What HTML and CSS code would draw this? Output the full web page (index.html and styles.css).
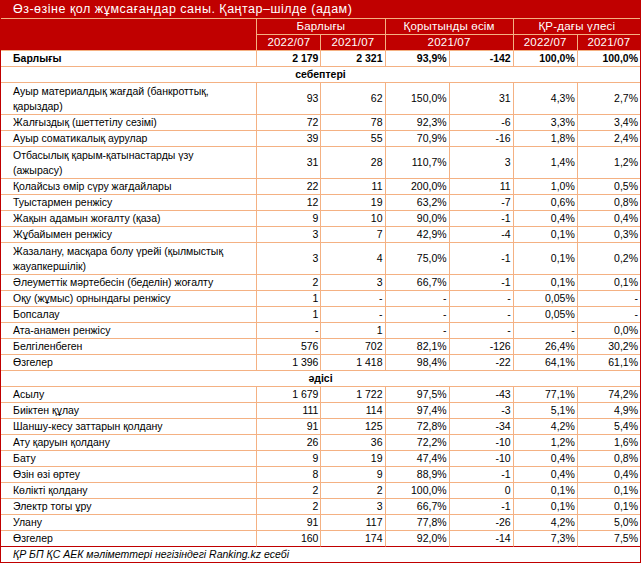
FILE: index.html
```html
<!DOCTYPE html>
<html lang="kk">
<head>
<meta charset="utf-8">
<title>Өз-өзіне қол жұмсағандар саны</title>
<link rel="stylesheet" href="styles.css">
</head>
<body>
<table class="sheet">
  <colgroup>
    <col class="c-label">
    <col class="c-num"><col class="c-num"><col class="c-num"><col class="c-num"><col class="c-num"><col class="c-last">
  </colgroup>
  <thead>
    <tr class="title-row"><th colspan="7" class="title">Өз-өзіне қол жұмсағандар саны. Қаңтар–шілде (адам)</th></tr>
    <tr class="head-row">
      <th rowspan="2" class="h-label"></th>
      <th colspan="2">Барлығы</th>
      <th colspan="2">Қорытынды өсім</th>
      <th colspan="2" class="end">ҚР-дағы үлесі</th>
    </tr>
    <tr class="head-row sub">
      <th>2022/07</th>
      <th>2021/07</th>
      <th colspan="2">2021/07</th>
      <th>2022/07</th>
      <th class="end">2021/07</th>
    </tr>
  </thead>
  <tbody>
    <tr class="total"><td class="lbl">Барлығы</td><td>2 179</td><td>2 321</td><td>93,9%</td><td>-142</td><td>100,0%</td><td class="end">100,0%</td></tr>
    <tr class="section"><td colspan="7">себептері</td></tr>
    <tr class="tall"><td class="lbl">Ауыр материалдық жағдай (банкроттық,<br>қарыздар)</td><td>93</td><td>62</td><td>150,0%</td><td>31</td><td>4,3%</td><td class="end">2,7%</td></tr>
    <tr><td class="lbl">Жалғыздық (шеттетілу сезімі)</td><td>72</td><td>78</td><td>92,3%</td><td>-6</td><td>3,3%</td><td class="end">3,4%</td></tr>
    <tr><td class="lbl">Ауыр соматикалық аурулар</td><td>39</td><td>55</td><td>70,9%</td><td>-16</td><td>1,8%</td><td class="end">2,4%</td></tr>
    <tr class="tall"><td class="lbl">Отбасылық қарым-қатынастарды үзу<br>(ажырасу)</td><td>31</td><td>28</td><td>110,7%</td><td>3</td><td>1,4%</td><td class="end">1,2%</td></tr>
    <tr><td class="lbl">Қолайсыз өмір сүру жағдайлары</td><td>22</td><td>11</td><td>200,0%</td><td>11</td><td>1,0%</td><td class="end">0,5%</td></tr>
    <tr><td class="lbl">Туыстармен ренжісу</td><td>12</td><td>19</td><td>63,2%</td><td>-7</td><td>0,6%</td><td class="end">0,8%</td></tr>
    <tr><td class="lbl">Жақын адамын жоғалту (қаза)</td><td>9</td><td>10</td><td>90,0%</td><td>-1</td><td>0,4%</td><td class="end">0,4%</td></tr>
    <tr><td class="lbl">Жұбайымен ренжісу</td><td>3</td><td>7</td><td>42,9%</td><td>-4</td><td>0,1%</td><td class="end">0,3%</td></tr>
    <tr class="tall"><td class="lbl">Жазалану, масқара болу үрейі (қылмыстық<br>жауапкершілік)</td><td>3</td><td>4</td><td>75,0%</td><td>-1</td><td>0,1%</td><td class="end">0,2%</td></tr>
    <tr><td class="lbl">Әлеуметтік мәртебесін (беделін) жоғалту</td><td>2</td><td>3</td><td>66,7%</td><td>-1</td><td>0,1%</td><td class="end">0,1%</td></tr>
    <tr><td class="lbl">Оқу (жұмыс) орнындағы ренжісу</td><td>1</td><td>-</td><td>-</td><td>-</td><td>0,05%</td><td class="end">-</td></tr>
    <tr><td class="lbl">Бопсалау</td><td>1</td><td>-</td><td>-</td><td>-</td><td>0,05%</td><td class="end">-</td></tr>
    <tr><td class="lbl">Ата-анамен ренжісу</td><td>-</td><td>1</td><td>-</td><td>-</td><td>-</td><td class="end">0,0%</td></tr>
    <tr><td class="lbl">Белгіленбеген</td><td>576</td><td>702</td><td>82,1%</td><td>-126</td><td>26,4%</td><td class="end">30,2%</td></tr>
    <tr><td class="lbl">Өзгелер</td><td>1 396</td><td>1 418</td><td>98,4%</td><td>-22</td><td>64,1%</td><td class="end">61,1%</td></tr>
    <tr class="section"><td colspan="7">әдісі</td></tr>
    <tr><td class="lbl">Асылу</td><td>1 679</td><td>1 722</td><td>97,5%</td><td>-43</td><td>77,1%</td><td class="end">74,2%</td></tr>
    <tr><td class="lbl">Биіктен құлау</td><td>111</td><td>114</td><td>97,4%</td><td>-3</td><td>5,1%</td><td class="end">4,9%</td></tr>
    <tr><td class="lbl">Шаншу-кесу заттарын қолдану</td><td>91</td><td>125</td><td>72,8%</td><td>-34</td><td>4,2%</td><td class="end">5,4%</td></tr>
    <tr><td class="lbl">Ату қаруын қолдану</td><td>26</td><td>36</td><td>72,2%</td><td>-10</td><td>1,2%</td><td class="end">1,6%</td></tr>
    <tr><td class="lbl">Бату</td><td>9</td><td>19</td><td>47,4%</td><td>-10</td><td>0,4%</td><td class="end">0,8%</td></tr>
    <tr><td class="lbl">Өзін өзі өртеу</td><td>8</td><td>9</td><td>88,9%</td><td>-1</td><td>0,4%</td><td class="end">0,4%</td></tr>
    <tr><td class="lbl">Көлікті қолдану</td><td>2</td><td>2</td><td>100,0%</td><td>0</td><td>0,1%</td><td class="end">0,1%</td></tr>
    <tr><td class="lbl">Электр тогы ұру</td><td>2</td><td>3</td><td>66,7%</td><td>-1</td><td>0,1%</td><td class="end">0,1%</td></tr>
    <tr><td class="lbl">Улану</td><td>91</td><td>117</td><td>77,8%</td><td>-26</td><td>4,2%</td><td class="end">5,0%</td></tr>
    <tr class="last"><td class="lbl">Өзгелер</td><td>160</td><td>174</td><td>92,0%</td><td>-14</td><td>7,3%</td><td class="end">7,5%</td></tr>
  </tbody>
  <tfoot>
    <tr class="foot"><td colspan="7">ҚР БП ҚС АЕК мәліметтері негізіндегі Ranking.kz есебі</td></tr>
  </tfoot>
</table>
</body>
</html>
```
FILE: styles.css
```css
html, body {
  margin: 0;
  padding: 0;
  background: #ffffff;
}

.sheet {
  border-collapse: separate;
  border-spacing: 0;
  table-layout: fixed;
  width: 641px;
  border-left: 1px solid #c00000;
  border-right: 1px solid #c00000;
  border-bottom: 1px solid #c00000;
  font-family: "Liberation Sans", Arial, sans-serif;
  font-size: 10.5px;
  color: #000000;
}

.c-label { width: 256px; }
.c-num { width: 64px; }
.c-last { width: 62px; }

.sheet th,
.sheet td {
  padding: 0 2px 0 2px;
  height: 15px;
  line-height: 15px;
  white-space: nowrap;
  overflow: hidden;
  border-right: 1px solid #f4b183;
  border-bottom: 1px solid #f4b183;
  text-align: right;
  vertical-align: middle;
  box-sizing: content-box;
}

.sheet th {
  background: #c00000;
  color: #ffffff;
  font-weight: normal;
  font-size: 11.5px;
  letter-spacing: 0.2px;
  text-align: center;
}

.sheet .end { border-right: none; }

.sheet .title-row .title {
  height: 18px;
  line-height: 18px;
  font-size: 12.5px;
  letter-spacing: 0.5px;
  text-align: left;
  padding-left: 12px;
  border-right: none;
}

.sheet td.lbl {
  text-align: left;
  padding-left: 12px;
}

.total td { font-weight: bold; }

.tall td { height: 31px; }
.tall td.lbl { line-height: 15px; }

.section td {
  font-weight: bold;
  text-align: center;
  border-right: none;
}

.last td { border-bottom-color: #c00000; }

.foot td {
  text-align: left;
  padding-left: 12px;
  font-style: italic;
  border-right: none;
  border-bottom: none;
}
```
